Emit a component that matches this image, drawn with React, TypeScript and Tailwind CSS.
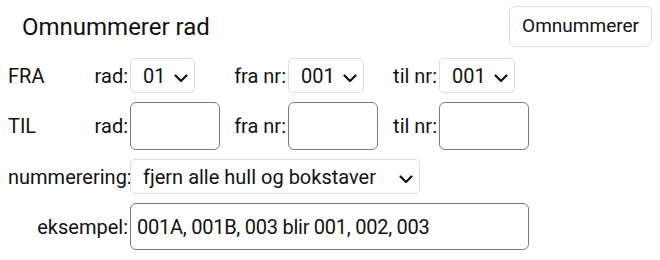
const font = { fontFamily: 'Roboto, "Liberation Sans", sans-serif' };

function Chevron() {
  return (
    <svg width="14" height="9" viewBox="0 0 14 9" fill="none" className="mt-[6px] shrink-0">
      <path d="M1.5 1.5 L7 7 L12.5 1.5" stroke="#111" strokeWidth="2.2" strokeLinecap="round" strokeLinejoin="round" />
    </svg>
  );
}

function FakeSelect({ value, className }: { value: string; className: string }) {
  return (
    <div
      className={`flex h-[35px] items-center justify-between rounded-[5px] border border-[#dcdcdc] bg-white pl-[12px] pr-[6px] text-[20px] text-[#111] ${className}`}
    >
      <span>{value}</span>
      <Chevron />
    </div>
  );
}

function TextBox() {
  return <div className="h-[48px] w-[90px] rounded-[6px] border border-[#7a7a7a] bg-white" />;
}

function Label({ children }: { children: React.ReactNode }) {
  return <span className="text-right text-[20px] leading-none text-[#111]">{children}</span>;
}

export default function App() {
  return (
    <div className="h-[260px] w-[660px] bg-white" style={font}>
      <div className="flex items-center justify-between pl-[22px] pr-[8px] pt-[6px]">
        <h2 className="text-[24px] text-[#111]">Omnummerer rad</h2>
        <button className="h-[41px] rounded-[6px] border border-[#dcdcdc] bg-white px-[12px] text-[19px] text-[#111]">
          Omnummerer
        </button>
      </div>

      <div className="mt-[11px] grid grid-cols-[120px_90px_64px_90px_57px_90px] items-center gap-x-[2px] gap-y-[9px] pl-[8px]">
        <div className="flex items-center justify-between text-[20px] text-[#111]">
          <span>FRA</span>
          <span>rad:</span>
        </div>
        <div>
          <FakeSelect value="01" className="w-[65px]" />
        </div>
        <Label>fra nr:</Label>
        <div>
          <FakeSelect value="001" className="w-[76px]" />
        </div>
        <Label>til nr:</Label>
        <div>
          <FakeSelect value="001" className="w-[76px]" />
        </div>

        <div className="flex items-center justify-between text-[20px] text-[#111]">
          <span>TIL</span>
          <span>rad:</span>
        </div>
        <TextBox />
        <Label>fra nr:</Label>
        <TextBox />
        <Label>til nr:</Label>
        <TextBox />

        <Label>nummerering:</Label>
        <div className="col-span-5">
          <FakeSelect value="fjern alle hull og bokstaver" className="w-[290px]" />
        </div>

        <Label>eksempel:</Label>
        <div className="col-span-5">
          <div className="flex h-[47px] w-[399px] items-center rounded-[6px] border border-[#7a7a7a] bg-white pl-[6px] text-[20px] tracking-[-0.25px] text-[#111]">
            001A, 001B, 003 blir 001, 002, 003
          </div>
        </div>
      </div>
    </div>
  );
}
